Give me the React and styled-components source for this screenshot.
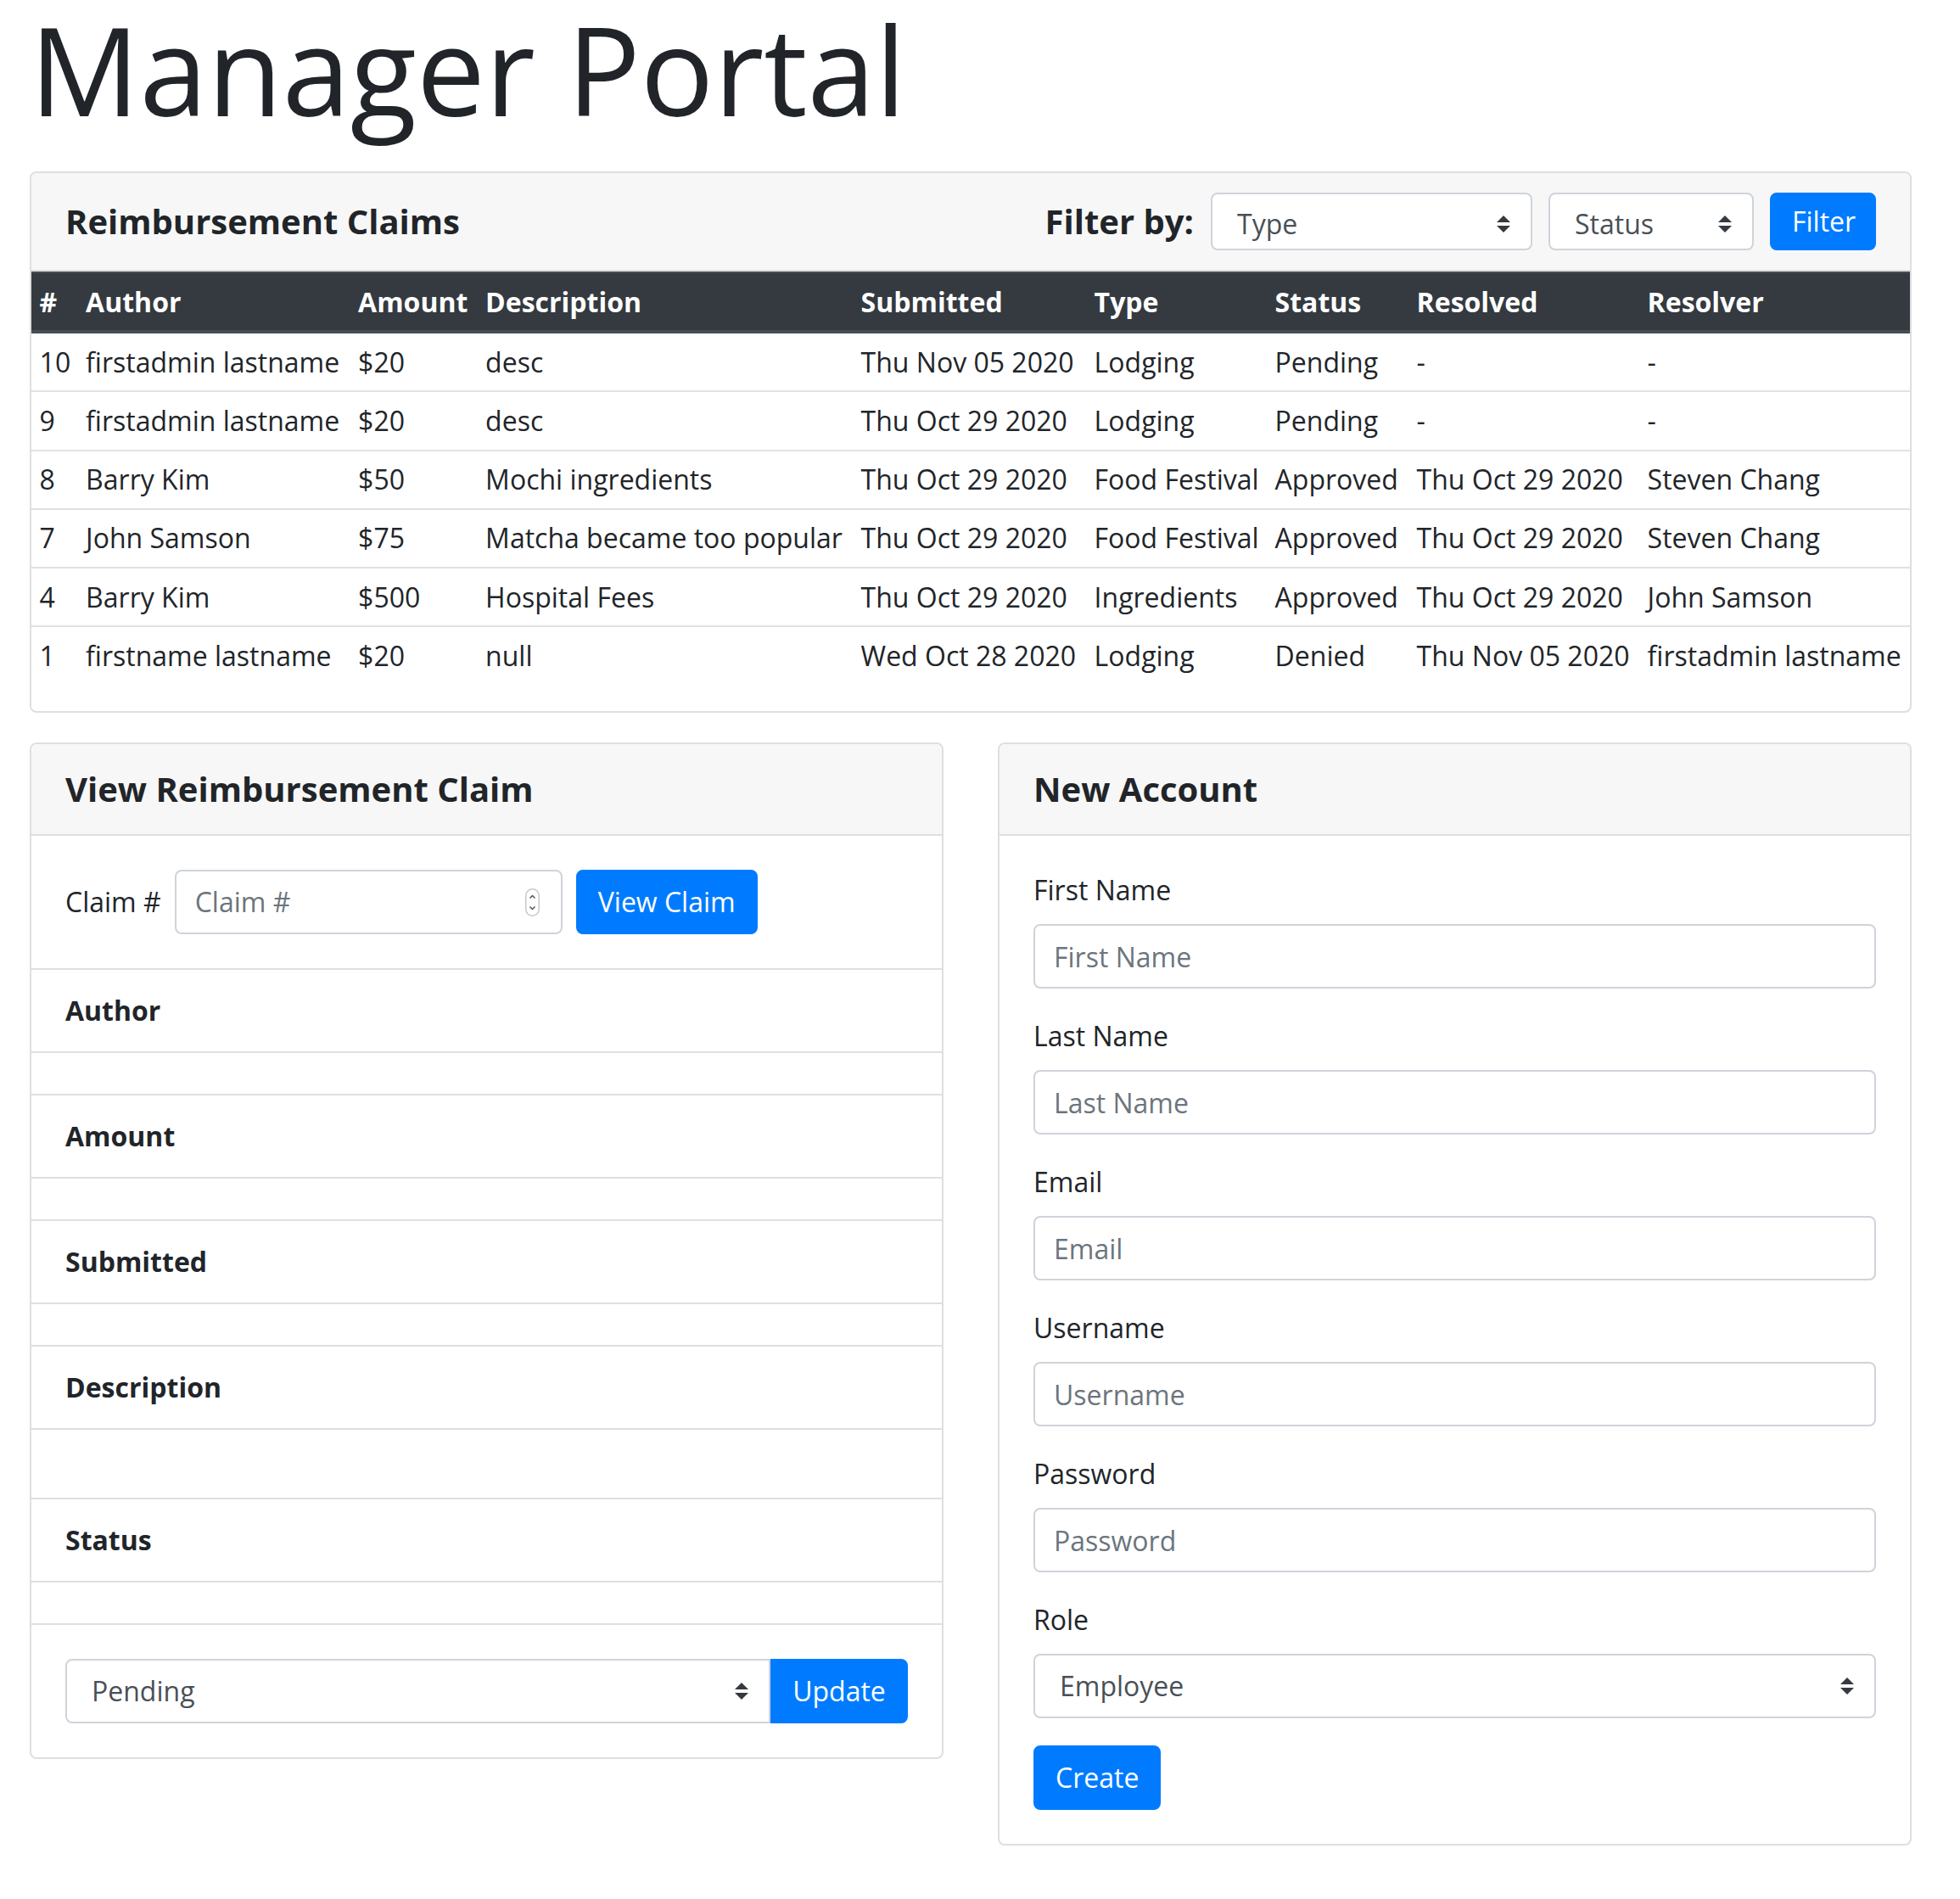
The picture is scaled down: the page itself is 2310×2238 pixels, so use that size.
import React from "react";
import styled, { createGlobalStyle } from "styled-components";

const GlobalStyle = createGlobalStyle`
  *, *::before, *::after { box-sizing: border-box; }
  html, body { margin: 0; padding: 0; background: #fff; }
  body {
    font-family: "Open Sans", "Noto Sans", sans-serif;
    color: #212529;
    font-size: 32px;
    line-height: 48px;
  }
`;

const Page = styled.div`
  width: 2218px;
  margin-left: 35px;
  padding-bottom: 60px;
`;

const Title = styled.h1`
  margin: 0 0 41px;
  padding-top: 1px;
  font-size: 144px;
  font-weight: 400;
  line-height: 160px;
  color: #212529;
`;

const Card = styled.section`
  border: 2px solid #dfdfdf;
  border-radius: 8px;
  background: #fff;
  overflow: hidden;
`;

const CardHeader = styled.header`
  display: flex;
  align-items: center;
  justify-content: space-between;
  height: ${(p) => p.$h}px;
  padding: 0 40px;
  background: #f7f7f7;
  border-bottom: 2px solid #dfdfdf;
`;

const CardTitle = styled.h2`
  margin: 0;
  font-size: 40px;
  font-weight: 700;
  line-height: 48px;
`;

const FilterBar = styled.div`
  display: flex;
  align-items: center;
  gap: 19px;
`;

const FilterLabel = styled.span`
  font-size: 40px;
  font-weight: 700;
  line-height: 48px;
  margin-right: 1px;
`;

const SelectBox = styled.div`
  display: flex;
  align-items: center;
  justify-content: space-between;
  width: ${(p) => (p.$w ? `${p.$w}px` : "auto")};
  flex: ${(p) => (p.$grow ? "1 1 auto" : "none")};
  height: ${(p) => p.$h || 76}px;
  padding: ${(p) => (p.$h ? "6px 24px 0 29px" : "0 24px 0 29px")};
  border: 2px solid #ced4da;
  border-radius: ${(p) => (p.$joined ? "8px 0 0 8px" : "8px")};
  background: #fff;
  color: #495057;
  font-size: 32px;
  line-height: 48px;
`;

const Button = styled.button`
  flex: none;
  width: ${(p) => (p.$w ? `${p.$w}px` : "auto")};
  height: ${(p) => p.$h || 76}px;
  padding: 0 24px;
  border: 2px solid #007bff;
  border-radius: ${(p) => (p.$joined ? "0 8px 8px 0" : "8px")};
  background: #007bff;
  color: #fff;
  font-family: inherit;
  font-size: 32px;
  line-height: 48px;
  cursor: pointer;
`;

const Table = styled.table`
  width: 100%;
  border-collapse: collapse;
  table-layout: fixed;
  margin-bottom: 32px;
`;

const Th = styled.th`
  background: #343a40;
  color: #fff;
  font-weight: 700;
  text-align: left;
  padding: 9.6px;
  border-top: 2px solid #454d55;
  border-bottom: 4px solid #454d55;
  white-space: nowrap;
  vertical-align: bottom;
`;

const Td = styled.td`
  padding: 9.6px;
  border-top: 2px solid #dee2e6;
  white-space: nowrap;
  vertical-align: top;
`;

const Columns = styled.div`
  display: grid;
  grid-template-columns: 1077px 1077px;
  gap: 64px;
  margin-top: 35px;
  align-items: start;
`;

const Section = styled.div`
  padding: 40px;
  border-bottom: ${(p) => (p.$last ? "none" : "2px solid #dfdfdf")};
`;

const InlineRow = styled.div`
  display: flex;
  align-items: center;
  gap: 16px;
`;

const InputGroup = styled.div`
  display: flex;
  align-items: stretch;
`;

const InlineLabel = styled.label`
  font-size: 32px;
  line-height: 48px;
`;

const NumberBox = styled.div`
  display: flex;
  align-items: center;
  width: 457px;
  height: 76px;
  padding: 0 25px 0 22px;
  border: 2px solid #ced4da;
  border-radius: 8px;
  background: #fff;
`;

const BareInput = styled.input`
  flex: 1;
  min-width: 0;
  border: none;
  outline: none;
  padding: 0;
  background: transparent;
  font-family: inherit;
  font-size: 32px;
  line-height: 48px;
  color: #495057;
  &::placeholder { color: #6c757d; opacity: 1; }
`;

const Item = styled.div`
  padding: 24px 40px;
  border-bottom: 2px solid #dfdfdf;
  font-weight: ${(p) => (p.$bold ? 700 : 400)};
  min-height: ${(p) => p.$min || 0}px;
`;

const FormGroup = styled.div`
  margin-bottom: 32px;
`;

const FieldLabel = styled.label`
  display: block;
  margin-bottom: 16px;
  font-size: 32px;
  line-height: 48px;
`;

const TextInput = styled.input`
  display: block;
  width: 100%;
  height: 76px;
  padding: 0 22px;
  border: 2px solid #ced4da;
  border-radius: 8px;
  background: #fff;
  font-family: inherit;
  font-size: 32px;
  line-height: 48px;
  color: #495057;
  outline: none;
  &::placeholder { color: #6c757d; opacity: 1; }
`;

const Arrows = () => (
  <svg width="16" height="20" viewBox="0 0 4 5" aria-hidden="true">
    <path d="M2 0L0 2h4zm0 5L0 3h4z" fill="#343a40" />
  </svg>
);

const Spinner = () => (
  <svg width="17" height="33" viewBox="0 0 17 33" aria-hidden="true">
    <rect x="0.75" y="0.75" width="15.5" height="31.5" rx="7.75" fill="#fff" stroke="#c9c9c9" strokeWidth="1.5" />
    <path d="M5.5 11.5L8.5 8.5L11.5 11.5" fill="none" stroke="#555" strokeWidth="1.5" />
    <path d="M5.5 21.5L8.5 24.5L11.5 21.5" fill="none" stroke="#555" strokeWidth="1.5" />
  </svg>
);

const columns = [
  { label: "#", w: 54.5 },
  { label: "Author", w: 321 },
  { label: "Amount", w: 150 },
  { label: "Description", w: 442.5 },
  { label: "Submitted", w: 275 },
  { label: "Type", w: 213 },
  { label: "Status", w: 167 },
  { label: "Resolved", w: 272 },
  { label: "Resolver", w: 319 },
];

const rows = [
  ["10", "firstadmin lastname", "$20", "desc", "Thu Nov 05 2020", "Lodging", "Pending", "-", "-"],
  ["9", "firstadmin lastname", "$20", "desc", "Thu Oct 29 2020", "Lodging", "Pending", "-", "-"],
  ["8", "Barry Kim", "$50", "Mochi ingredients", "Thu Oct 29 2020", "Food Festival", "Approved", "Thu Oct 29 2020", "Steven Chang"],
  ["7", "John Samson", "$75", "Matcha became too popular", "Thu Oct 29 2020", "Food Festival", "Approved", "Thu Oct 29 2020", "Steven Chang"],
  ["4", "Barry Kim", "$500", "Hospital Fees", "Thu Oct 29 2020", "Ingredients", "Approved", "Thu Oct 29 2020", "John Samson"],
  ["1", "firstname lastname", "$20", "null", "Wed Oct 28 2020", "Lodging", "Denied", "Thu Nov 05 2020", "firstadmin lastname"],
];

const details = [
  { label: "Author" },
  { label: "Amount" },
  { label: "Submitted" },
  { label: "Description", min: 82 },
  { label: "Status" },
];

const fields = ["First Name", "Last Name", "Email", "Username", "Password"];

export default function App() {
  return (
    <>
      <GlobalStyle />
      <Page>
        <Title>Manager Portal</Title>

        <Card>
          <CardHeader $h={116}>
            <CardTitle>Reimbursement Claims</CardTitle>
            <FilterBar>
              <FilterLabel>Filter by:</FilterLabel>
              <SelectBox $w={379} $h={68}>
                <span>Type</span>
                <Arrows />
              </SelectBox>
              <SelectBox $w={242} $h={68}>
                <span>Status</span>
                <Arrows />
              </SelectBox>
              <Button $h={68} $w={125}>Filter</Button>
            </FilterBar>
          </CardHeader>
          <Table>
            <colgroup>
              {columns.map((c) => (
                <col key={c.label} style={{ width: `${c.w}px` }} />
              ))}
            </colgroup>
            <thead>
              <tr>
                {columns.map((c) => (
                  <Th key={c.label}>{c.label}</Th>
                ))}
              </tr>
            </thead>
            <tbody>
              {rows.map((r) => (
                <tr key={r[0]}>
                  {r.map((cell, i) => (
                    <Td key={i}>{cell}</Td>
                  ))}
                </tr>
              ))}
            </tbody>
          </Table>
        </Card>

        <Columns>
          <Card>
            <CardHeader $h={108}>
              <CardTitle>View Reimbursement Claim</CardTitle>
            </CardHeader>
            <Section>
              <InlineRow>
                <InlineLabel>Claim #</InlineLabel>
                <NumberBox>
                  <BareInput placeholder="Claim #" />
                  <Spinner />
                </NumberBox>
                <Button $w={214}>View Claim</Button>
              </InlineRow>
            </Section>
            {details.map((d) => (
              <React.Fragment key={d.label}>
                <Item $bold>{d.label}</Item>
                <Item $min={d.min} />
              </React.Fragment>
            ))}
            <Section $last>
              <InputGroup>
                <SelectBox $grow $joined>
                  <span>Pending</span>
                  <Arrows />
                </SelectBox>
                <Button $joined $w={162}>Update</Button>
              </InputGroup>
            </Section>
          </Card>

          <Card>
            <CardHeader $h={108}>
              <CardTitle>New Account</CardTitle>
            </CardHeader>
            <Section $last>
              {fields.map((f) => (
                <FormGroup key={f}>
                  <FieldLabel>{f}</FieldLabel>
                  <TextInput placeholder={f} />
                </FormGroup>
              ))}
              <FormGroup>
                <FieldLabel>Role</FieldLabel>
                <SelectBox>
                  <span>Employee</span>
                  <Arrows />
                </SelectBox>
              </FormGroup>
              <Button>Create</Button>
            </Section>
          </Card>
        </Columns>
      </Page>
    </>
  );
}
